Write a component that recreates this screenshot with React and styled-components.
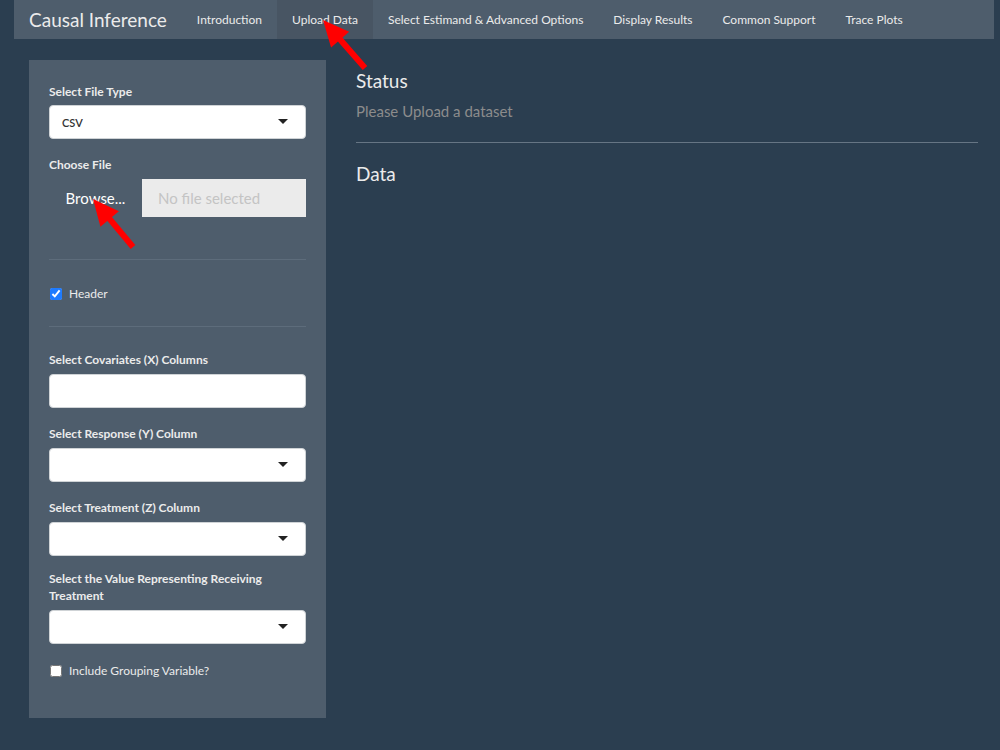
import React from "react";
import styled, { createGlobalStyle } from "styled-components";

const Global = createGlobalStyle`
  html, body { margin: 0; padding: 0; }
  body {
    background: #2b3e50;
    font-family: Lato, "Open Sans", sans-serif;
    color: #ebebeb;
    width: 1000px;
    height: 750px;
    overflow: hidden;
  }
`;

const Page = styled.div`
  position: relative;
  width: 1000px;
  height: 750px;
  background: #2b3e50;
`;

const Navbar = styled.nav`
  display: flex;
  align-items: stretch;
  height: 39px;
  margin: 0 6px 0 14px;
  background: #4e5d6c;
`;

const Brand = styled.div`
  display: flex;
  align-items: center;
  padding: 0 15px 1px 15px;
  font-size: 19px;
  color: #ebebeb;
`;

const NavLink = styled.div`
  display: flex;
  align-items: center;
  padding: 0 15px;
  font-size: 12px;
  color: #ebebeb;
  background: ${(p) => (p.$active ? "#485563" : "transparent")};
`;

const Body = styled.div`
  display: flex;
  align-items: flex-start;
  gap: 30px;
  padding: 21px 22px 0 29px;
`;

const Well = styled.div`
  width: 297px;
  box-sizing: border-box;
  background: #4e5d6c;
  padding: 23px 20px 39px 20px;
`;

const FormGroup = styled.div`
  margin-bottom: ${(p) => p.$mb ?? 17}px;
`;

const Label = styled.div`
  font-size: 12px;
  font-weight: 700;
  line-height: 17px;
  color: #ebebeb;
  margin-bottom: ${(p) => p.$mb ?? 5}px;
`;

const SelectBox = styled.div`
  position: relative;
  height: 34px;
  box-sizing: border-box;
  background: #fff;
  border: 1px solid #cfd3d6;
  border-radius: 4px;
  display: flex;
  align-items: center;
  padding: 0 12px;
  font-size: 11px;
  font-weight: 600;
  color: #333;
`;

const Caret = styled.span`
  position: absolute;
  right: 17px;
  top: 50%;
  margin-top: -3px;
  width: 0;
  height: 0;
  border-left: 5px solid transparent;
  border-right: 5px solid transparent;
  border-top: 5px solid #222;
`;

const TextBox = styled.div`
  height: 34px;
  box-sizing: border-box;
  background: #fff;
  border: 1px solid #cfd3d6;
  border-radius: 4px;
`;

const FileRow = styled.div`
  display: flex;
  height: 38px;
`;

const BrowseButton = styled.div`
  width: 93px;
  display: flex;
  align-items: center;
  justify-content: center;
  font-size: 15px;
  color: #fff;
`;

const FileName = styled.div`
  flex: 1;
  display: flex;
  align-items: center;
  padding-left: 16px;
  background: #ebebeb;
  font-size: 15px;
  color: #c4c4c4;
`;

const Rule = styled.div`
  height: 1px;
  background: ${(p) => p.$color || "#5d6c7b"};
  margin: ${(p) => p.$mt}px 0 ${(p) => p.$mbm}px 0;
`;

const CheckRow = styled.label`
  display: flex;
  align-items: center;
  height: 17px;
  font-size: 12px;
  color: #ebebeb;
  margin-top: ${(p) => p.$mt ?? 0}px;
`;

const Check = styled.input`
  width: 12px;
  height: 12px;
  margin: 0 7px 0 1px;
  accent-color: #1e7bff;
`;

const Main = styled.div`
  flex: 1;
  padding-top: 10px;
`;

const Heading = styled.div`
  font-size: 19px;
  line-height: 22px;
  color: #ebebeb;
`;

const Muted = styled.div`
  font-size: 15px;
  line-height: 20px;
  color: #8c8c8c;
  margin-top: 9px;
`;

const Overlay = styled.svg`
  position: absolute;
  left: 0;
  top: 0;
  pointer-events: none;
`;

function Arrow({ tail, tip }) {
  const dx = tip[0] - tail[0];
  const dy = tip[1] - tail[1];
  const len = Math.hypot(dx, dy);
  const ux = dx / len;
  const uy = dy / len;
  const head = 26;
  const half = 12;
  const bx = tip[0] - ux * head;
  const by = tip[1] - uy * head;
  const px = -uy;
  const py = ux;
  const pts = [
    [tip[0], tip[1]],
    [bx + px * half, by + py * half],
    [bx - px * half, by - py * half],
  ]
    .map((p) => p.join(","))
    .join(" ");
  return (
    <g>
      <line
        x1={tail[0]}
        y1={tail[1]}
        x2={bx + ux * 4}
        y2={by + uy * 4}
        stroke="#ff0000"
        strokeWidth="6"
      />
      <polygon points={pts} fill="#ff0000" />
    </g>
  );
}

function Select({ value }) {
  return (
    <SelectBox>
      {value}
      <Caret />
    </SelectBox>
  );
}

export default function App() {
  return (
    <Page>
      <Global />
      <Navbar>
        <Brand>Causal Inference</Brand>
        <NavLink>Introduction</NavLink>
        <NavLink $active>Upload Data</NavLink>
        <NavLink>Select Estimand &amp; Advanced Options</NavLink>
        <NavLink>Display Results</NavLink>
        <NavLink>Common Support</NavLink>
        <NavLink>Trace Plots</NavLink>
      </Navbar>
      <Body>
        <Well>
          <FormGroup>
            <Label>Select File Type</Label>
            <Select value="CSV" />
          </FormGroup>
          <FormGroup $mb={42}>
            <Label $mb={6}>Choose File</Label>
            <FileRow>
              <BrowseButton>Browse...</BrowseButton>
              <FileName>No file selected</FileName>
            </FileRow>
          </FormGroup>
          <Rule $mt={0} $mbm={25} />
          <CheckRow>
            <Check type="checkbox" defaultChecked />
            Header
          </CheckRow>
          <Rule $mt={24} $mbm={24} />
          <FormGroup>
            <Label $mb={6}>Select Covariates (X) Columns</Label>
            <TextBox />
          </FormGroup>
          <FormGroup>
            <Label $mb={6}>Select Response (Y) Column</Label>
            <Select />
          </FormGroup>
          <FormGroup $mb={14}>
            <Label $mb={6}>Select Treatment (Z) Column</Label>
            <Select />
          </FormGroup>
          <FormGroup $mb={0}>
            <Label $mb={6}>
              Select the Value Representing Receiving
              <br />
              Treatment
            </Label>
            <Select />
          </FormGroup>
          <CheckRow $mt={18}>
            <Check type="checkbox" />
            Include Grouping Variable?
          </CheckRow>
        </Well>
        <Main>
          <Heading>Status</Heading>
          <Muted>Please Upload a dataset</Muted>
          <Rule $color="#667584" $mt={21} $mbm={20} />
          <Heading>Data</Heading>
        </Main>
      </Body>
      <Overlay width="1000" height="750" viewBox="0 0 1000 750">
        <Arrow tail={[365, 68]} tip={[323, 20]} />
        <Arrow tail={[133, 247]} tip={[93, 199]} />
      </Overlay>
    </Page>
  );
}
